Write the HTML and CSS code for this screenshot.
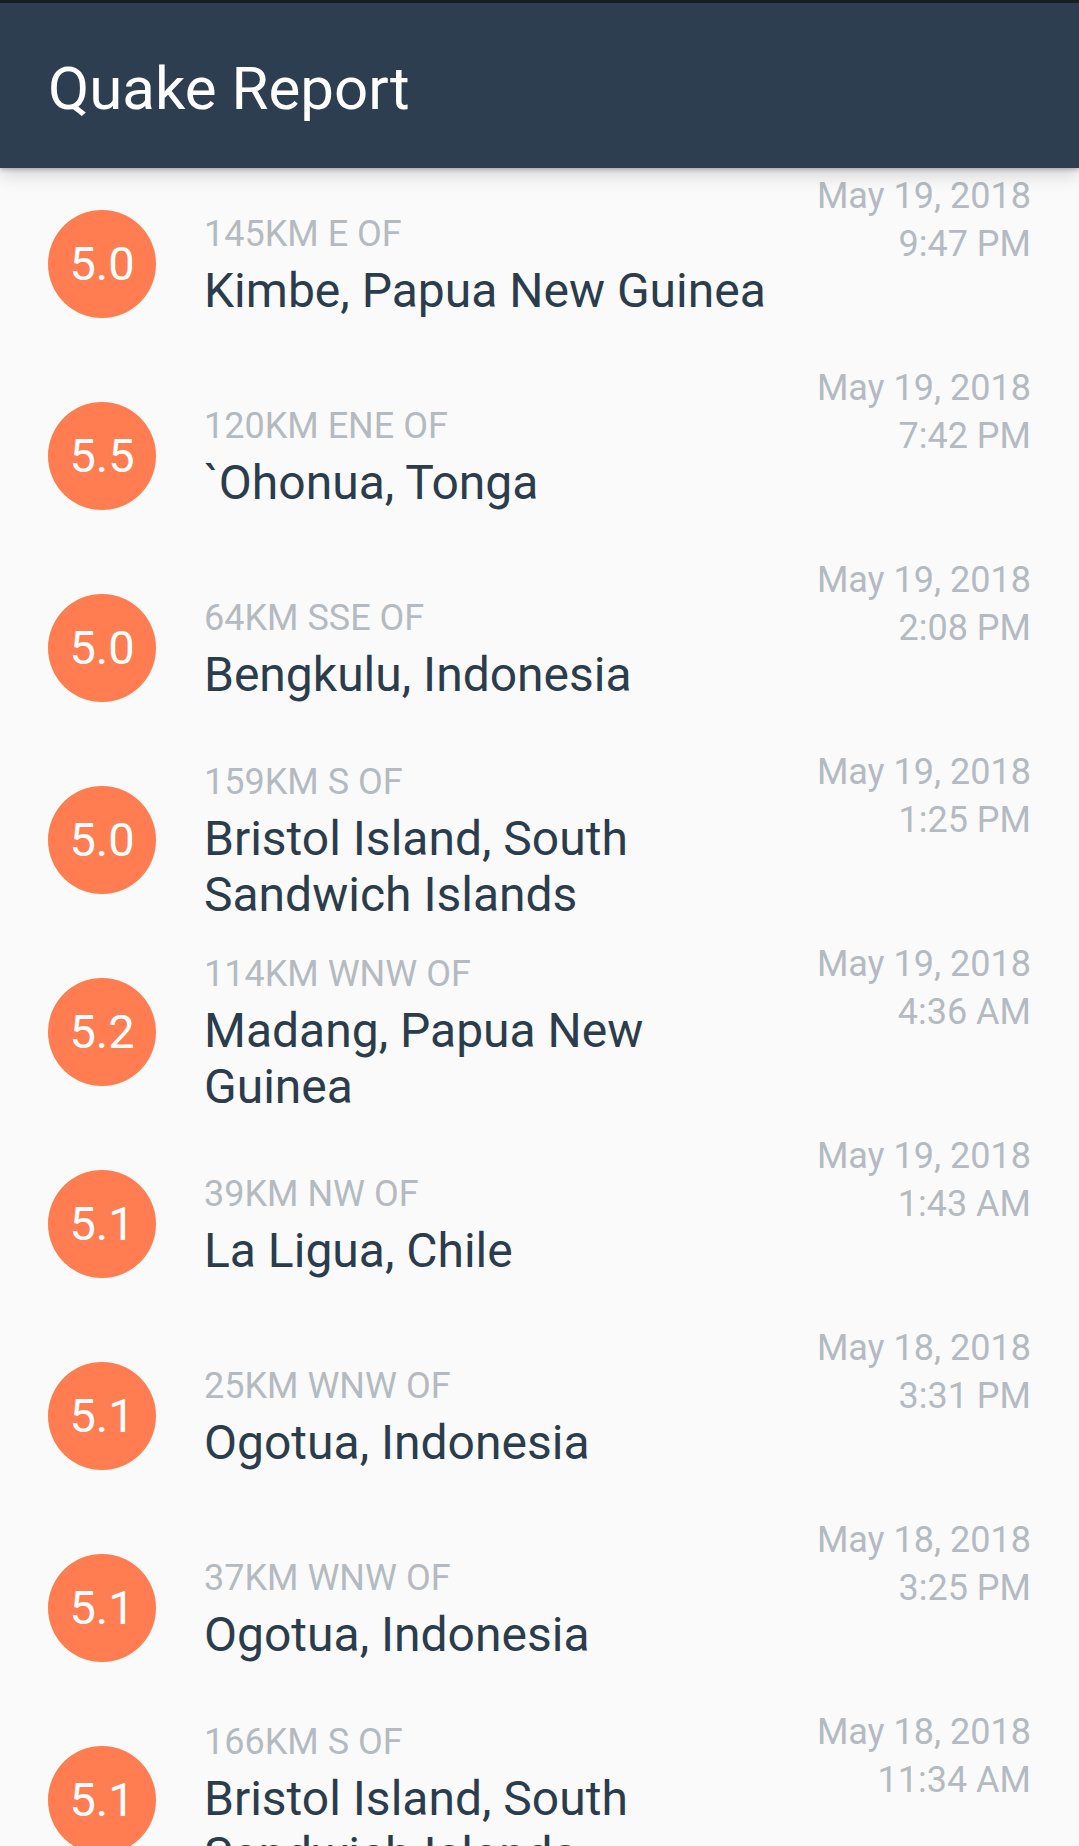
FILE: index.html
```html
<!DOCTYPE html>
<html lang="en">
<head>
<meta charset="utf-8">
<title>Quake Report</title>
<link rel="stylesheet" href="styles.css">
</head>
<body>
<header class="app-bar">
  <h1 class="app-title">Quake Report</h1>
</header>
<ul class="quake-list">
  <li class="quake">
    <div class="mag">5.0</div>
    <div class="place"><div class="offset">145KM E OF</div><div class="primary">Kimbe, Papua New Guinea</div></div>
    <div class="when"><div>May 19, 2018</div><div>9:47 PM</div></div>
  </li>
  <li class="quake">
    <div class="mag">5.5</div>
    <div class="place"><div class="offset">120KM ENE OF</div><div class="primary">`Ohonua, Tonga</div></div>
    <div class="when"><div>May 19, 2018</div><div>7:42 PM</div></div>
  </li>
  <li class="quake">
    <div class="mag">5.0</div>
    <div class="place"><div class="offset">64KM SSE OF</div><div class="primary">Bengkulu, Indonesia</div></div>
    <div class="when"><div>May 19, 2018</div><div>2:08 PM</div></div>
  </li>
  <li class="quake">
    <div class="mag">5.0</div>
    <div class="place"><div class="offset">159KM S OF</div><div class="primary">Bristol Island, South Sandwich Islands</div></div>
    <div class="when"><div>May 19, 2018</div><div>1:25 PM</div></div>
  </li>
  <li class="quake">
    <div class="mag">5.2</div>
    <div class="place"><div class="offset">114KM WNW OF</div><div class="primary">Madang, Papua New Guinea</div></div>
    <div class="when"><div>May 19, 2018</div><div>4:36 AM</div></div>
  </li>
  <li class="quake">
    <div class="mag">5.1</div>
    <div class="place"><div class="offset">39KM NW OF</div><div class="primary">La Ligua, Chile</div></div>
    <div class="when"><div>May 19, 2018</div><div>1:43 AM</div></div>
  </li>
  <li class="quake">
    <div class="mag">5.1</div>
    <div class="place"><div class="offset">25KM WNW OF</div><div class="primary">Ogotua, Indonesia</div></div>
    <div class="when"><div>May 18, 2018</div><div>3:31 PM</div></div>
  </li>
  <li class="quake">
    <div class="mag">5.1</div>
    <div class="place"><div class="offset">37KM WNW OF</div><div class="primary">Ogotua, Indonesia</div></div>
    <div class="when"><div>May 18, 2018</div><div>3:25 PM</div></div>
  </li>
  <li class="quake">
    <div class="mag">5.1</div>
    <div class="place"><div class="offset">166KM S OF</div><div class="primary">Bristol Island, South Sandwich Islands</div></div>
    <div class="when"><div>May 18, 2018</div><div>11:34 AM</div></div>
  </li>
</ul>
</body>
</html>
```

FILE: styles.css
```css
html, body {
  margin: 0;
  padding: 0;
}

body {
  width: 1079px;
  height: 1846px;
  overflow: hidden;
  background: #fafafa;
  font-family: Roboto, "Noto Sans", "Liberation Sans", sans-serif;
}

.app-bar {
  position: relative;
  z-index: 2;
  box-sizing: border-box;
  height: 168px;
  padding: 51px 48px 0 48px;
  background: #2c3e50;
  border-top: 3px solid #161d25;
  box-shadow: 0 2px 4px rgba(0, 0, 0, 0.22), 0 8px 16px rgba(0, 0, 0, 0.14);
}

.app-title {
  margin: 0;
  font-size: 60px;
  font-weight: 400;
  line-height: 70px;
  color: #ffffff;
}

.quake-list {
  list-style: none;
  margin: 0;
  padding: 0;
}

.quake {
  display: flex;
  align-items: center;
  height: 192px;
  padding: 0 48px;
}

.mag {
  flex: none;
  width: 108px;
  height: 108px;
  border-radius: 50%;
  background: #ff7d50;
  color: #ffffff;
  font-size: 47px;
  line-height: 108px;
  text-align: center;
  margin-right: 48px;
}

.place {
  flex: 1;
  min-width: 0;
  margin-top: 3px;
}

.offset {
  font-size: 36px;
  line-height: 42px;
  color: #b4bac0;
  margin-bottom: 8px;
}

.primary {
  font-size: 48px;
  line-height: 56px;
  color: #2b3d4d;
}

.when {
  flex: none;
  align-self: flex-start;
  margin-left: 32px;
  padding-top: 4px;
  font-size: 36px;
  line-height: 48px;
  color: #b4bac0;
  text-align: right;
}
```
